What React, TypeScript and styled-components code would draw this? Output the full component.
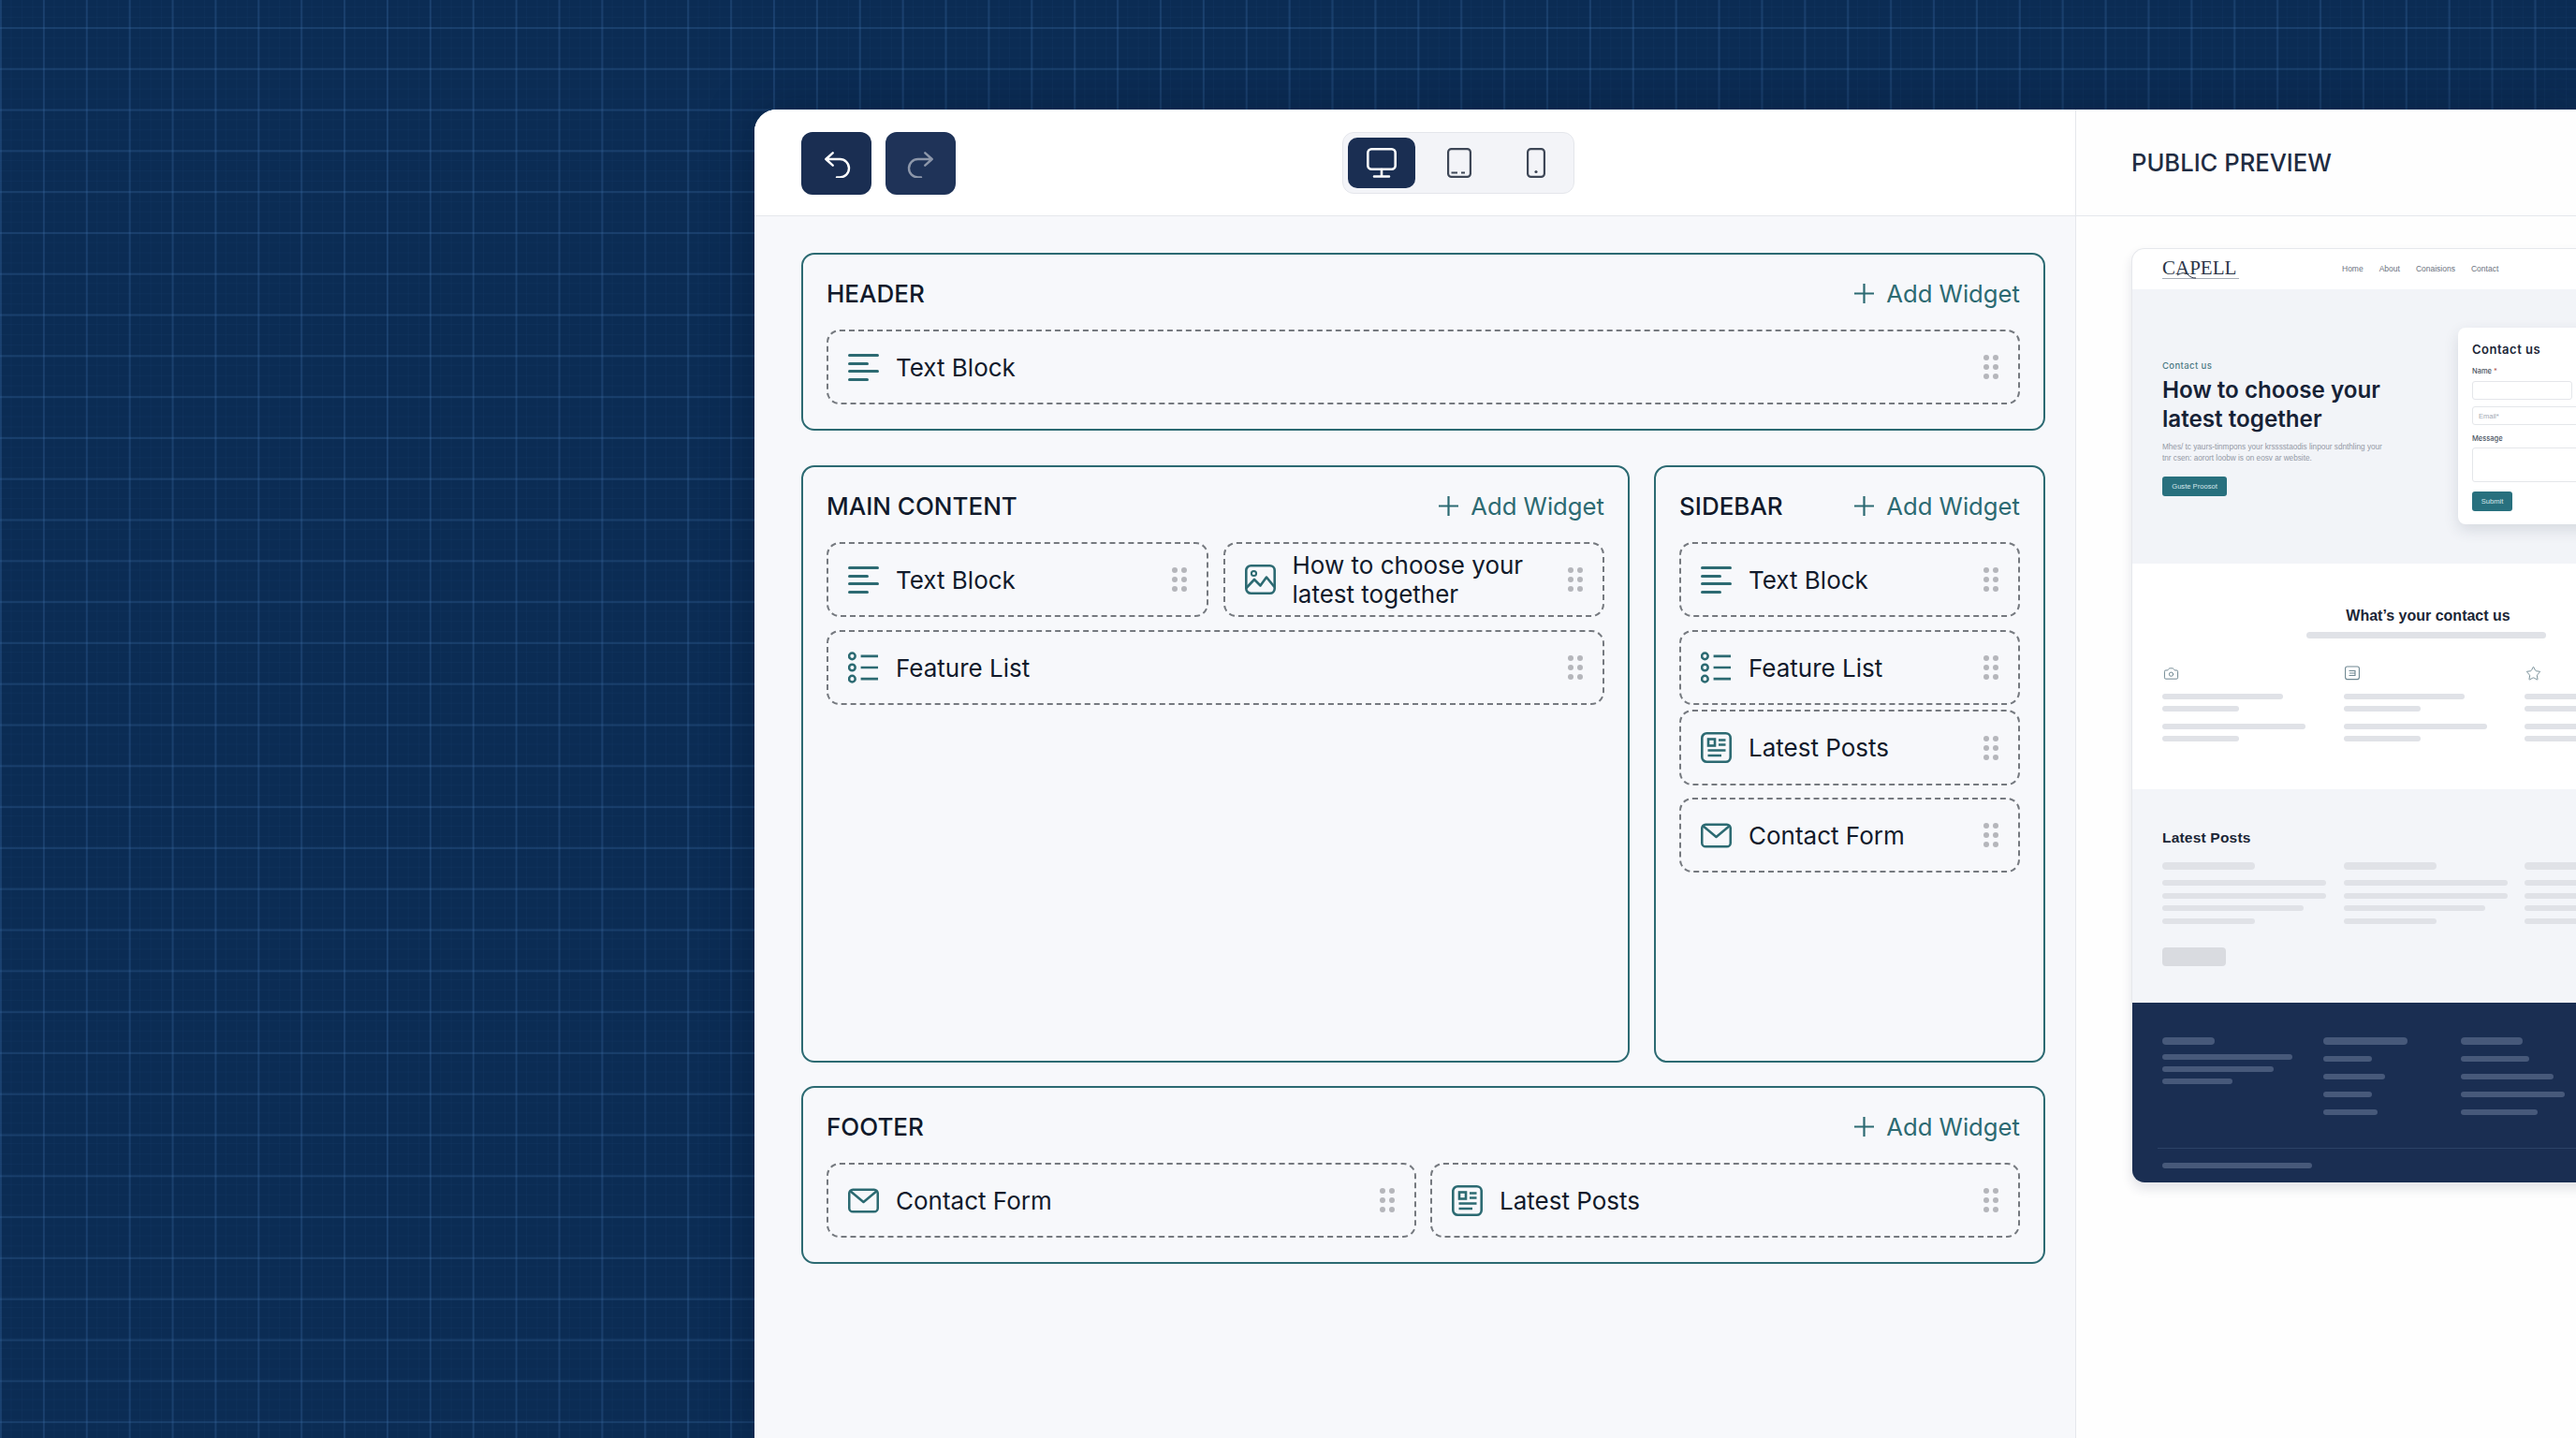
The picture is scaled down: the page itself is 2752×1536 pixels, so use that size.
import * as React from 'react';
import styled, { createGlobalStyle } from 'styled-components';
import { Camera, Star } from 'lucide-react';

const TEAL = '#2c6a72';
const NAVY = '#1a2e52';

const GlobalStyle = createGlobalStyle`
  html, body { margin: 0; padding: 0; }
  body { font-family: Inter, "Liberation Sans", sans-serif; background: #0b2c56; }
`;

const Page = styled.div`
  width: 2752px;
  height: 1536px;
  box-sizing: border-box;
  overflow: hidden;
  padding: 117px 0 0 806px;
  background-color: #0b2c54;
  background-image:
    linear-gradient(to right, rgba(62, 112, 170, 0.27) 1.5px, transparent 1.5px),
    linear-gradient(to bottom, rgba(62, 112, 170, 0.27) 1.5px, transparent 1.5px),
    linear-gradient(to right, rgba(62, 112, 170, 0.06) 1px, transparent 1px),
    linear-gradient(to bottom, rgba(62, 112, 170, 0.06) 1px, transparent 1px);
  background-size: 45.9px 43.8px, 45.9px 43.8px, 11.47px 10.95px, 11.47px 10.95px;
  background-position: 0 29px, 0 29px, 0 7px, 0 7px;
`;

const AppWindow = styled.div`
  display: flex;
  width: 1946px;
  height: 1419px;
  overflow: hidden;
  border-top-left-radius: 24px;
  background: #fff;
  box-shadow: 0 0 50px rgba(4, 18, 40, 0.35);
`;

const Editor = styled.div`
  width: 1412px;
  flex-shrink: 0;
  display: flex;
  flex-direction: column;
  box-sizing: border-box;
  background: #f7f8fb;
  border-right: 1px solid #e5e7ec;
`;

const Toolbar = styled.div`
  height: 114px;
  flex-shrink: 0;
  display: flex;
  align-items: flex-start;
  gap: 15px;
  padding: 24px 0 0 50px;
  box-sizing: border-box;
  background: #fff;
  border-bottom: 1px solid #e5e7ec;
`;

const HistoryButton = styled.button<{ $dim?: boolean }>`
  width: 75px;
  height: 67px;
  padding: 0;
  border: none;
  border-radius: 12px;
  display: flex;
  align-items: center;
  justify-content: center;
  background: ${p => (p.$dim ? '#1f3358' : NAVY)};
  color: ${p => (p.$dim ? '#8d97aa' : '#ffffff')};
`;

const DeviceGroup = styled.div`
  margin-left: 398px;
  width: 248px;
  height: 66px;
  box-sizing: border-box;
  display: flex;
  align-items: center;
  padding-left: 5px;
  border: 1px solid #e4e6eb;
  border-radius: 12px;
  background: #f3f4f8;
`;

const DeviceButton = styled.div<{ $w: number; $active?: boolean }>`
  width: ${p => p.$w}px;
  height: 54px;
  display: flex;
  align-items: center;
  justify-content: center;
  border-radius: 10px;
  background: ${p => (p.$active ? NAVY : 'transparent')};
  color: ${p => (p.$active ? '#ffffff' : '#3d4656')};
`;

const Canvas = styled.div`
  flex: 1;
  display: flex;
  flex-direction: column;
  padding: 39px 32px 0 50px;
`;

const Zone = styled.section<{ $h?: number }>`
  box-sizing: border-box;
  height: ${p => (p.$h ? `${p.$h}px` : 'auto')};
  padding: 0 25px;
  border: 2px solid ${TEAL};
  border-radius: 14px;
  min-width: 0;
`;

const ZoneRow = styled.div`
  display: grid;
  grid-template-columns: 885px 418px;
  gap: 26px;
  margin: 37px 0 25px;
`;

const ZoneHead = styled.div`
  height: 80px;
  box-sizing: border-box;
  padding-top: 3px;
  display: flex;
  align-items: center;
  justify-content: space-between;
`;

const ZoneTitle = styled.h2`
  margin: 0;
  font-size: 26px;
  font-weight: 500;
  color: #111a2b;
`;

const AddWidget = styled.div`
  display: flex;
  align-items: center;
  gap: 13px;
  font-size: 25.7px;
  color: ${TEAL};
`;

const WidgetGrid = styled.div<{ $cols: number; $gap: number }>`
  display: grid;
  grid-template-columns: repeat(${p => p.$cols}, 1fr);
  column-gap: ${p => p.$gap}px;
  row-gap: 14px;
`;

const WidgetStack = styled.div`
  display: flex;
  flex-direction: column;
`;

const Widget = styled.div<{ $h?: number; $top?: number; $span?: boolean }>`
  box-sizing: border-box;
  height: ${p => p.$h ?? 80}px;
  margin-top: ${p => p.$top ?? 0}px;
  grid-column: ${p => (p.$span ? '1 / -1' : 'auto')};
  display: flex;
  align-items: center;
  gap: 18px;
  padding: 0 21px;
  border: 2px dashed #75797f;
  border-radius: 14px;
`;

const WidgetIcon = styled.span`
  width: 33px;
  flex-shrink: 0;
  display: flex;
  align-items: center;
  justify-content: center;
  color: ${TEAL};
`;

const WidgetLabel = styled.span`
  font-size: 26px;
  line-height: 31px;
  color: #111a2b;
`;

const Grip = styled.span`
  margin-left: auto;
  flex-shrink: 0;
  display: grid;
  grid-template-columns: 6px 6px;
  grid-auto-rows: 6px;
  column-gap: 4px;
  row-gap: 4px;
  i {
    border-radius: 50%;
    background: #b5b6bb;
  }
`;

const PreviewPanel = styled.div`
  flex: 1;
  min-width: 0;
  background: #fefefe;
`;

const PreviewHead = styled.div`
  height: 114px;
  box-sizing: border-box;
  display: flex;
  align-items: center;
  padding: 0 0 0 59px;
  border-bottom: 1px solid #e5e7ec;
  font-size: 25.6px;
  font-weight: 500;
  color: #1f2c42;
`;

const SiteCard = styled.div`
  width: 640px;
  margin: 34px 0 0 59px;
  border: 1px solid #e6e8ec;
  border-right: none;
  border-radius: 14px 0 0 14px;
  box-sizing: border-box;
  background: #fff;
  box-shadow: 0 6px 12px rgba(30, 45, 70, 0.12);
`;

const SiteNav = styled.div`
  height: 43px;
  padding-bottom: 2px;
  box-sizing: border-box;
  display: flex;
  align-items: center;
  padding-left: 32px;
`;

const Logo = styled.div`
  position: relative;
  width: 82px;
  font-family: "Liberation Serif", serif;
  font-size: 21px;
  line-height: 22px;
  color: #2a3547;
  white-space: nowrap;
  border-bottom: 1px solid #a7adb8;
  svg {
    position: absolute;
    left: 16px;
    top: 13px;
  }
`;

const NavLinks = styled.div`
  margin-left: 110px;
  display: flex;
  gap: 17px;
  font-family: "Liberation Sans", sans-serif;
  font-size: 8.5px;
  color: #6b7280;
`;

const Hero = styled.div`
  height: 293px;
  display: flex;
  align-items: flex-start;
  padding: 41px 0 0 32px;
  box-sizing: border-box;
  background: #f2f4f8;
`;

const HeroCopy = styled.div`
  width: 316px;
  flex-shrink: 0;
  padding-top: 34px;
`;

const Eyebrow = styled.div`
  font-size: 9.5px;
  line-height: 14px;
  font-weight: 500;
  letter-spacing: 0.4px;
  color: #4d7a84;
`;

const HeroTitle = styled.h3`
  margin: 3px 0 0;
  font-size: 24.2px;
  line-height: 31px;
  font-weight: 600;
  color: #162236;
`;

const HeroText = styled.p`
  margin: 9px 0 0;
  font-family: "Liberation Sans", sans-serif;
  font-size: 8.2px;
  line-height: 12px;
  color: #9298a5;
  white-space: nowrap;
`;

const TealButton = styled.div<{ $w: number; $mt: number }>`
  width: ${p => p.$w}px;
  height: 21px;
  margin-top: ${p => p.$mt}px;
  display: flex;
  align-items: center;
  justify-content: center;
  border-radius: 3px;
  background: #28707e;
  font-family: "Liberation Sans", sans-serif;
  font-size: 7.6px;
  color: #d5e6ea;
`;

const FormCard = styled.div`
  width: 200px;
  height: 210px;
  box-sizing: border-box;
  padding: 15px 0 0 15px;
  flex-shrink: 0;
  border-radius: 8px;
  background: #fff;
  box-shadow: 0 6px 16px rgba(40, 55, 80, 0.14);
`;

const FormTitle = styled.div`
  font-size: 13px;
  line-height: 16px;
  font-weight: 600;
  letter-spacing: 0.5px;
  color: #1b2636;
`;

const FieldLabel = styled.div<{ $mt: number }>`
  margin-top: ${p => p.$mt}px;
  font-size: 7.5px;
  line-height: 12px;
  font-weight: 500;
  color: #4a5261;
  b {
    color: #b45a5a;
    font-weight: 500;
  }
`;

const Field = styled.div<{ $w: number; $h: number; $mt: number }>`
  width: ${p => p.$w}px;
  height: ${p => p.$h}px;
  margin-top: ${p => p.$mt}px;
  box-sizing: border-box;
  padding-left: 6px;
  display: flex;
  align-items: center;
  border: 1px solid #e4e6ea;
  border-radius: 3px;
  background: #fff;
  font-family: "Liberation Sans", sans-serif;
  font-size: 7.5px;
  color: #a3a9b3;
`;

const FeatureBlock = styled.div`
  height: 241px;
  box-sizing: border-box;
  padding: 46px 0 0 32px;
  background: #fff;
`;

const FeatureTitle = styled.div`
  width: 568px;
  text-align: center;
  font-family: "Liberation Sans", sans-serif;
  font-size: 16px;
  line-height: 20px;
  font-weight: 700;
  color: #1b2636;
`;

const FeatureColumns = styled.div`
  display: grid;
  grid-template-columns: repeat(3, 153px);
  column-gap: 40.6px;
  margin-top: 29px;
`;

const FeatureIcon = styled.div`
  height: 18px;
  margin-left: 1px;
  color: #6e8791;
`;

const Bar = styled.div<{ $w: number; $h?: number; $mt?: number; $tone?: string; $left?: number; $radius?: number }>`
  width: ${p => p.$w}px;
  height: ${p => p.$h ?? 6}px;
  margin-top: ${p => p.$mt ?? 0}px;
  margin-left: ${p => p.$left ?? 0}px;
  border-radius: ${p => p.$radius ?? Math.ceil((p.$h ?? 6) / 2)}px;
  background: ${p => p.$tone ?? '#e0e2e7'};
`;

const PostsBlock = styled.div`
  height: 228px;
  box-sizing: border-box;
  padding: 43px 0 0 32px;
  background: #f3f5f9;
`;

const PostsTitle = styled.div`
  font-family: "Liberation Sans", sans-serif;
  font-size: 15.5px;
  line-height: 18px;
  font-weight: 700;
  letter-spacing: 0.2px;
  color: #1b2636;
`;

const PostsColumns = styled.div`
  display: grid;
  grid-template-columns: repeat(3, 175px);
  column-gap: 18.6px;
  margin-top: 17px;
`;

const SiteFooter = styled.div`
  height: 192px;
  box-sizing: border-box;
  padding-top: 37px;
  border-bottom-left-radius: 13px;
  background: ${NAVY};
`;

const FooterColumns = styled.div`
  display: grid;
  grid-template-columns: 172px 147px 1fr;
  height: 118px;
  padding-left: 32px;
`;

const FooterBase = styled.div`
  margin-left: 27px;
  padding: 15px 0 0 5px;
  border-top: 1px solid #2c4266;
`;

const FOOT = '#47597a';

const Line = ({ w, y, h = 3 }: { w: number; y: number; h?: number }) => (
  <rect x="0" y={y} width={w} height={h} rx={h / 2} fill="currentColor" />
);

const TextIcon = () => (
  <svg width="33" height="29" viewBox="0 0 33 29">
    <Line w={33} y={0} />
    <Line w={22} y={9} />
    <Line w={33} y={17} />
    <Line w={22} y={26} />
  </svg>
);

const ListIcon = () => (
  <svg width="34" height="34" viewBox="0 0 34 34" fill="none" stroke="currentColor" strokeWidth="2.6">
    <circle cx="4.5" cy="4.5" r="3.4" />
    <circle cx="4.5" cy="17" r="3.4" />
    <circle cx="4.5" cy="29.5" r="3.4" />
    <path d="M14 4.5H33M14 17H33M14 29.5H33" />
  </svg>
);

const PostsIcon = () => (
  <svg width="33" height="33" viewBox="0 0 33 33" fill="none" stroke="currentColor" strokeWidth="2.6">
    <rect x="1.3" y="1.3" width="30.4" height="30.4" rx="5" />
    <rect x="8" y="7.5" width="7" height="7" />
    <path d="M19 8.5H26.5M19 13.5H26.5M7.5 19.5H26.5M7.5 25H22" />
  </svg>
);

const MailIcon = () => (
  <svg width="34" height="27" viewBox="0 0 34 27" fill="none" stroke="currentColor" strokeWidth="2.6" strokeLinejoin="round">
    <rect x="1.3" y="1.3" width="31.4" height="24.4" rx="4" />
    <path d="M2.5 3L17 15L31.5 3" />
  </svg>
);

const ImageIcon = () => (
  <svg width="33" height="32" viewBox="0 0 33 32" fill="none" stroke="currentColor" strokeWidth="2.6" strokeLinejoin="round">
    <rect x="1.3" y="1.3" width="30.4" height="29.4" rx="5" />
    <circle cx="9.5" cy="9.5" r="2.6" strokeWidth="2" />
    <path d="M1.5 25L10 16L16.5 22.5L23 13.5L31.5 24" />
  </svg>
);

const PlusIcon = () => (
  <svg width="21" height="21" viewBox="0 0 21 21" stroke="currentColor" strokeWidth="2.2">
    <path d="M10.5 0V21M0 10.5H21" />
  </svg>
);

const icons = {
  text: TextIcon,
  list: ListIcon,
  posts: PostsIcon,
  mail: MailIcon,
  image: ImageIcon,
};

type WidgetProps = {
  kind: keyof typeof icons;
  children: React.ReactNode;
  h?: number;
  top?: number;
  span?: boolean;
};

const WidgetItem = ({ kind, children, h, top, span }: WidgetProps) => {
  const Icon = icons[kind];
  return (
    <Widget $h={h} $top={top} $span={span}>
      <WidgetIcon><Icon /></WidgetIcon>
      <WidgetLabel>{children}</WidgetLabel>
      <Grip>{[0, 1, 2, 3, 4, 5].map(i => <i key={i} />)}</Grip>
    </Widget>
  );
};

const Head = ({ title }: { title: string }) => (
  <ZoneHead>
    <ZoneTitle>{title}</ZoneTitle>
    <AddWidget><PlusIcon />Add Widget</AddWidget>
  </ZoneHead>
);

const App = () => (
  <Page>
    <GlobalStyle />
    <AppWindow>
      <Editor>
        <Toolbar>
          <HistoryButton>
            <svg width="30" height="30" viewBox="0 0 30 30" fill="none" stroke="currentColor" strokeWidth="2.4" strokeLinecap="round" strokeLinejoin="round">
              <path d="M10.7 3.3L3.3 10L10.7 16.7M3.3 10H18.3A9.7 9.7 0 0 1 18.3 29.4H15" />
            </svg>
          </HistoryButton>
          <HistoryButton $dim>
            <svg width="30" height="30" viewBox="0 0 30 30" fill="none" stroke="currentColor" strokeWidth="2.4" strokeLinecap="round" strokeLinejoin="round">
              <path d="M19.3 3.3L26.7 10L19.3 16.7M26.7 10H11.7A9.7 9.7 0 0 0 11.7 29.4H15" />
            </svg>
          </HistoryButton>
          <DeviceGroup>
            <DeviceButton $w={72} $active>
              <svg width="32" height="32" viewBox="0 0 32 32" fill="none" stroke="currentColor" strokeWidth="2.6" strokeLinecap="round">
                <rect x="1.3" y="1.3" width="29.4" height="21.4" rx="4" />
                <path d="M16 23V30M8 30.5H24" />
              </svg>
            </DeviceButton>
            <DeviceButton $w={94}>
              <svg width="26" height="32" viewBox="0 0 26 32" fill="none" stroke="currentColor" strokeWidth="2.2">
                <rect x="1.1" y="1.1" width="23.8" height="29.8" rx="3.5" />
                <path d="M4.5 26.5H11M15 26.5H19" />
              </svg>
            </DeviceButton>
            <DeviceButton $w={70}>
              <svg width="20" height="32" viewBox="0 0 20 32" fill="none" stroke="currentColor" strokeWidth="2.2">
                <rect x="1.1" y="1.1" width="17.8" height="29.8" rx="3.5" />
                <circle cx="10" cy="25.5" r="1.6" fill="currentColor" stroke="none" />
              </svg>
            </DeviceButton>
          </DeviceGroup>
        </Toolbar>

        <Canvas>
          <Zone $h={190}>
            <Head title="HEADER" />
            <WidgetItem kind="text">Text Block</WidgetItem>
          </Zone>

          <ZoneRow>
            <Zone $h={638}>
              <Head title="MAIN CONTENT" />
              <WidgetGrid $cols={2} $gap={16}>
                <WidgetItem kind="text">Text Block</WidgetItem>
                <WidgetItem kind="image">How to choose your<br />latest together</WidgetItem>
                <WidgetItem kind="list" span>Feature List</WidgetItem>
              </WidgetGrid>
            </Zone>
            <Zone $h={638}>
              <Head title="SIDEBAR" />
              <WidgetStack>
                <WidgetItem kind="text">Text Block</WidgetItem>
                <WidgetItem kind="list" top={14}>Feature List</WidgetItem>
                <WidgetItem kind="posts" top={5} h={81}>Latest Posts</WidgetItem>
                <WidgetItem kind="mail" top={13}>Contact Form</WidgetItem>
              </WidgetStack>
            </Zone>
          </ZoneRow>

          <Zone $h={190}>
            <Head title="FOOTER" />
            <WidgetGrid $cols={2} $gap={15}>
              <WidgetItem kind="mail">Contact Form</WidgetItem>
              <WidgetItem kind="posts">Latest Posts</WidgetItem>
            </WidgetGrid>
          </Zone>
        </Canvas>
      </Editor>

      <PreviewPanel>
        <PreviewHead>PUBLIC PREVIEW</PreviewHead>
        <SiteCard>
          <SiteNav>
            <Logo>
              CAPELL
              <svg width="24" height="10" viewBox="0 0 24 10" fill="none" stroke="#2a3547" strokeWidth="1">
                <path d="M0 6C5 3 8 3 11 5C14 8 16 9 20 9" />
              </svg>
            </Logo>
            <NavLinks>
              <span>Home</span>
              <span>About</span>
              <span>Conaisions</span>
              <span>Contact</span>
            </NavLinks>
          </SiteNav>

          <Hero>
            <HeroCopy>
              <Eyebrow>Contact us</Eyebrow>
              <HeroTitle>How to choose your<br />latest together</HeroTitle>
              <HeroText>Mhes/ tc yaurs-tinmpons your krsssstaodis linpour sdnthling your<br />tnr csen: aorort loobw is on eosv ar website.</HeroText>
              <TealButton $w={69} $mt={13}>Guste Proosot</TealButton>
            </HeroCopy>
            <FormCard>
              <FormTitle>Contact us</FormTitle>
              <FieldLabel $mt={10}>Name <b>*</b></FieldLabel>
              <Field $w={107} $h={20} $mt={4} />
              <Field $w={170} $h={20} $mt={7}>Email*</Field>
              <FieldLabel $mt={9}>Message</FieldLabel>
              <Field $w={170} $h={37} $mt={3} />
              <TealButton $w={43} $mt={10}>Submit</TealButton>
            </FormCard>
          </Hero>

          <FeatureBlock>
            <FeatureTitle>What’s your contact us</FeatureTitle>
            <Bar $w={256} $h={7} $mt={7} $left={154} />
            <FeatureColumns>
              {[
                <Camera key="c" size={17} strokeWidth={1.4} />,
                <svg key="n" width="16" height="16" viewBox="0 0 16 16" fill="none" stroke="currentColor" strokeWidth="1.1">
                  <rect x="0.6" y="1" width="14.8" height="13.6" rx="2" />
                  <path d="M4.5 5.5H11V10.5H4.5M5 8H10.5" />
                </svg>,
                <Star key="s" size={17} strokeWidth={1.3} />,
              ].map((icon, i) => (
                <div key={i}>
                  <FeatureIcon>{icon}</FeatureIcon>
                  <Bar $w={129} $mt={12} />
                  <Bar $w={82} $mt={7} />
                  <Bar $w={153} $mt={13} />
                  <Bar $w={82} $mt={7} />
                </div>
              ))}
            </FeatureColumns>
          </FeatureBlock>

          <PostsBlock>
            <PostsTitle>Latest Posts</PostsTitle>
            <PostsColumns>
              {[0, 1, 2].map(i => (
                <div key={i}>
                  <Bar $w={99} $h={8} />
                  <Bar $w={175} $mt={11} />
                  <Bar $w={175} $mt={8} />
                  <Bar $w={151} $mt={7} />
                  <Bar $w={99} $mt={8} />
                </div>
              ))}
            </PostsColumns>
            <Bar $w={68} $h={20} $mt={25} $tone="#d9dbe0" $radius={4} />
          </PostsBlock>

          <SiteFooter>
            <FooterColumns>
              <div>
                <Bar $w={56} $h={8} $tone={FOOT} />
                <Bar $w={139} $mt={10} $tone={FOOT} />
                <Bar $w={119} $mt={7} $tone={FOOT} />
                <Bar $w={75} $mt={7} $tone={FOOT} />
              </div>
              <div>
                <Bar $w={90} $h={8} $tone={FOOT} />
                <Bar $w={52} $mt={12} $tone={FOOT} />
                <Bar $w={66} $mt={13} $tone={FOOT} />
                <Bar $w={52} $mt={13} $tone={FOOT} />
                <Bar $w={58} $mt={13} $tone={FOOT} />
              </div>
              <div>
                <Bar $w={66} $h={8} $tone={FOOT} />
                <Bar $w={73} $mt={12} $tone={FOOT} />
                <Bar $w={99} $mt={13} $tone={FOOT} />
                <Bar $w={111} $mt={13} $tone={FOOT} />
                <Bar $w={82} $mt={13} $tone={FOOT} />
              </div>
            </FooterColumns>
            <FooterBase>
              <Bar $w={160} $tone={FOOT} />
            </FooterBase>
          </SiteFooter>
        </SiteCard>
      </PreviewPanel>
    </AppWindow>
  </Page>
);

export default App;
